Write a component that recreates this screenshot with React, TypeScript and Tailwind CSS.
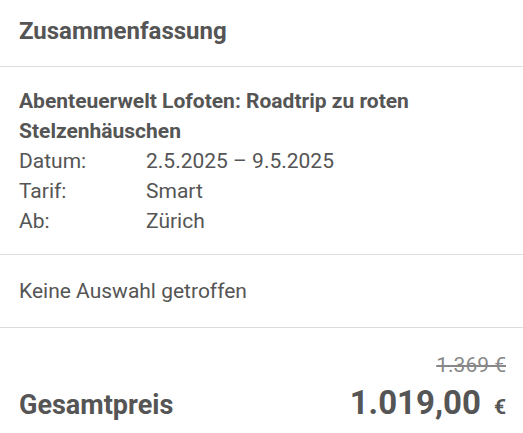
export default function App() {
  return (
    <div className="w-[523px] h-[433px] bg-white text-[#555555] overflow-hidden" style={{ fontFamily: "Roboto, sans-serif" }}>
      <div className="px-[19px] h-[67px] flex items-center pb-[4px] border-b border-[#dcdcdc]">
        <h2 className="text-[24px] font-bold leading-[28px]">Zusammenfassung</h2>
      </div>
      <div className="px-[19px] pt-[19px] pb-[18px] border-b border-[#dcdcdc]">
        <div className="text-[21px] font-bold leading-[30px] pr-[90px]">Abenteuerwelt Lofoten: Roadtrip zu roten Stelzenhäuschen</div>
        <div className="grid grid-cols-[127px_1fr] text-[21px] leading-[30px]">
          <span>Datum:</span>
          <span>2.5.2025 – 9.5.2025</span>
          <span>Tarif:</span>
          <span>Smart</span>
          <span>Ab:</span>
          <span>Zürich</span>
        </div>
      </div>
      <div className="px-[19px] h-[73px] flex items-center border-b border-[#dcdcdc]">
        <span className="text-[21px] leading-[30px]">Keine Auswahl getroffen</span>
      </div>
      <div className="px-[19px] pr-[17px] pt-[25px]">
        <div className="text-right text-[21px] leading-[24px] text-[#888888] line-through">1.369 €</div>
        <div className="flex items-baseline justify-between mt-[6px]">
          <span className="text-[27px] font-bold leading-[36px]">Gesamtpreis</span>
          <span className="font-bold leading-[40px]"><span className="text-[33px]">1.019,00</span><span className="text-[21px] ml-[13px]">€</span></span>
        </div>
      </div>
    </div>
  );
}
